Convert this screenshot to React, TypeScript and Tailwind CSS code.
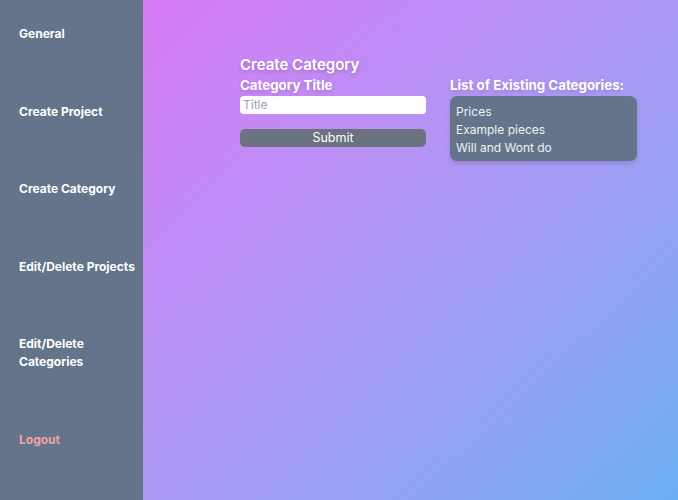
const navItems = [
  { label: "General" },
  { label: "Create Project" },
  { label: "Create Category" },
  { label: "Edit/Delete Projects" },
  { label: "Edit/Delete Categories", wrap: true },
];

const categories = ["Prices", "Example pieces", "Will and Wont do"];

export default function App() {
  return (
    <div className="flex h-[500px] w-[678px] font-['Inter',sans-serif]">
      <aside className="flex w-[143px] shrink-0 flex-col bg-[#64748b] pl-[19px] pt-[25px] text-[12px] font-bold text-white">
        {navItems.map((item) => (
          <div
            key={item.label}
            className={`mb-[59.5px] leading-[18px] ${item.wrap ? "w-[90px]" : ""}`}
          >
            {item.label}
          </div>
        ))}
        <div className="leading-[18px] text-[#f4a3a3]">Logout</div>
      </aside>
      <main className="flex-1 bg-gradient-to-br from-[#d77af7] to-[#6bb0f1] pl-[97px] pt-[55px]">
        <div className="flex gap-[24px]">
          <div className="w-[186px]">
            <h1 className="text-[15px] font-semibold leading-[20px] text-white [text-shadow:0_2px_4px_rgba(0,0,0,0.2)]">
              Create Category
            </h1>
            <div className="text-[13.3px] font-bold leading-[20px] text-white [text-shadow:0_2px_4px_rgba(0,0,0,0.15)]">
              Category Title
            </div>
            <input
              placeholder="Title"
              className="mt-[1px] block h-[18px] w-full rounded-[4px] bg-white px-[3px] text-[12px] text-gray-700 outline-none placeholder:text-gray-400"
            />
            <button className="mt-[15px] block h-[18px] w-full rounded-[5px] bg-[#6b7280] text-[12.5px] leading-[18px] text-white">
              Submit
            </button>
          </div>
          <div className="w-[187px] pt-[20px]">
            <div className="text-[13.3px] font-bold leading-[20px] text-white [text-shadow:0_2px_4px_rgba(0,0,0,0.15)]">
              List of Existing Categories:
            </div>
            <div className="mt-[1px] rounded-[7px] bg-[#64748b] px-[6px] pb-[4px] pt-[7px] shadow-md">
              {categories.map((c) => (
                <div key={c} className="text-[12px] leading-[18px] text-white/90">
                  {c}
                </div>
              ))}
            </div>
          </div>
        </div>
      </main>
    </div>
  );
}
